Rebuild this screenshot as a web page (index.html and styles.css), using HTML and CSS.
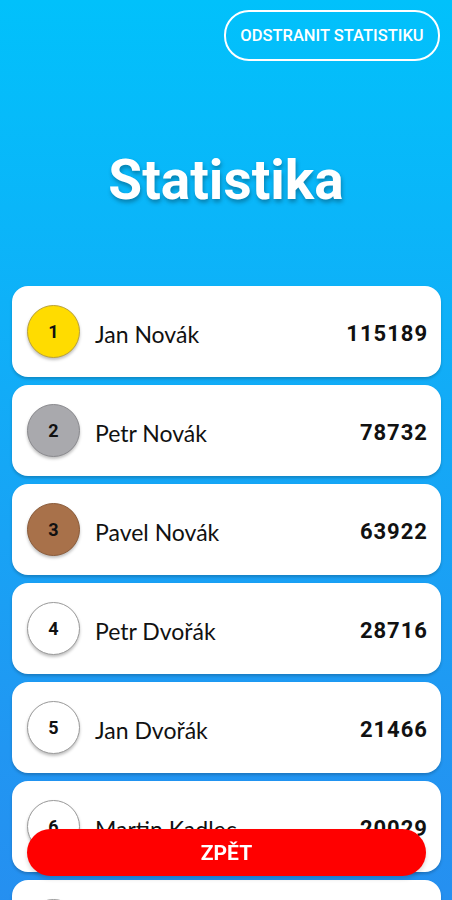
FILE: index.html
```html
<!DOCTYPE html>
<html lang="cs">
<head>
    <meta charset="UTF-8">
    <meta name="viewport" content="width=device-width, initial-scale=1.0">
    <title>Statistika</title>
    <link rel="stylesheet" href="styles.css">
</head>
<body>
<header class="top">
    <button class="clear">ODSTRANIT STATISTIKU</button>
</header>
<h1 class="title">Statistika</h1>
<ul class="board">
    <li><span class="place gold">1</span><span class="name">Jan Novák</span><b class="score">115189</b></li>
    <li><span class="place silver">2</span><span class="name">Petr Novák</span><b class="score">78732</b></li>
    <li><span class="place bronze">3</span><span class="name">Pavel Novák</span><b class="score">63922</b></li>
    <li><span class="place">4</span><span class="name">Petr Dvořák</span><b class="score">28716</b></li>
    <li><span class="place">5</span><span class="name">Jan Dvořák</span><b class="score">21466</b></li>
    <li><span class="place">6</span><span class="name">Martin Kadlec</span><b class="score">20029</b></li>
    <li><span class="place">7</span><span class="name">Tomáš Kadlec</span><b class="score">18350</b></li>
    <li><span class="place">8</span><span class="name">Jana Veselá</span><b class="score">12004</b></li>
</ul>
<button class="back">ZPĚT</button>
</body>
</html>
```

FILE: styles.css
```css
html {
    background: #2a88ee;
}
body {
    margin: 0;
    padding-top: 10px;
    min-height: 900px;
    background: linear-gradient(to bottom, #01c1fb 0%, #0fb0f8 30%, #2196f2 70%, #2a88ee 100%);
    font-family: Roboto, "Liberation Sans", sans-serif;
}
ul {
    margin: 0;
    padding: 0;
    list-style: none;
}
.top {
    display: flex;
    justify-content: flex-end;
    padding-right: 12px;
}
.clear {
    width: 216px;
    height: 51px;
    border: 2px solid #fff;
    border-radius: 25px;
    background: transparent;
    color: #fff;
    font: 500 16.5px Roboto, sans-serif;
    padding: 0;
}
.title {
    margin: 87px 0 0;
    text-align: center;
    color: #fff;
    font: 700 55px/64px Roboto, sans-serif;
    text-shadow: 1px 3px 4px rgba(0, 0, 0, .3);
}
.board {
    margin-top: 74px;
    padding: 0 11px 0 12px;
    display: flex;
    flex-direction: column;
    gap: 8px;
}
.board li {
    display: flex;
    align-items: center;
    height: 91px;
    padding: 0 13px 0 15px;
    background: #fff;
    border-radius: 16px;
    box-shadow: 0 2px 3px rgba(0, 0, 0, .2);
}
.place {
    flex: none;
    width: 51px;
    height: 51px;
    border: 1px solid #9a9a9a;
    border-radius: 50%;
    background: #fff;
    box-shadow: 0 2px 3px rgba(0, 0, 0, .25);
    display: flex;
    align-items: center;
    justify-content: center;
    font: 700 18px Roboto, sans-serif;
    color: #111;
}
.gold {
    background: #ffdc00;
    border-color: #b9a13a;
}
.silver {
    background: #a9a9ad;
    border-color: #8a8a8e;
}
.bronze {
    background: #a8714a;
    border-color: #8a5b3a;
}
.name {
    flex: 1;
    margin-left: 15px;
    padding-top: 4px;
    font: 23px Lato, sans-serif;
    color: #111;
}
.score {
    padding-top: 4px;
    font: 700 22px Roboto, sans-serif;
    letter-spacing: 1px;
    color: #111;
}
.back {
    position: fixed;
    left: 27px;
    right: 26px;
    bottom: 24px;
    height: 47px;
    border: none;
    border-radius: 24px;
    background: #ff0000;
    color: #fff;
    font: 700 21px Roboto, sans-serif;
    box-shadow: 0 3px 4px rgba(0, 0, 0, .15);
}
```
